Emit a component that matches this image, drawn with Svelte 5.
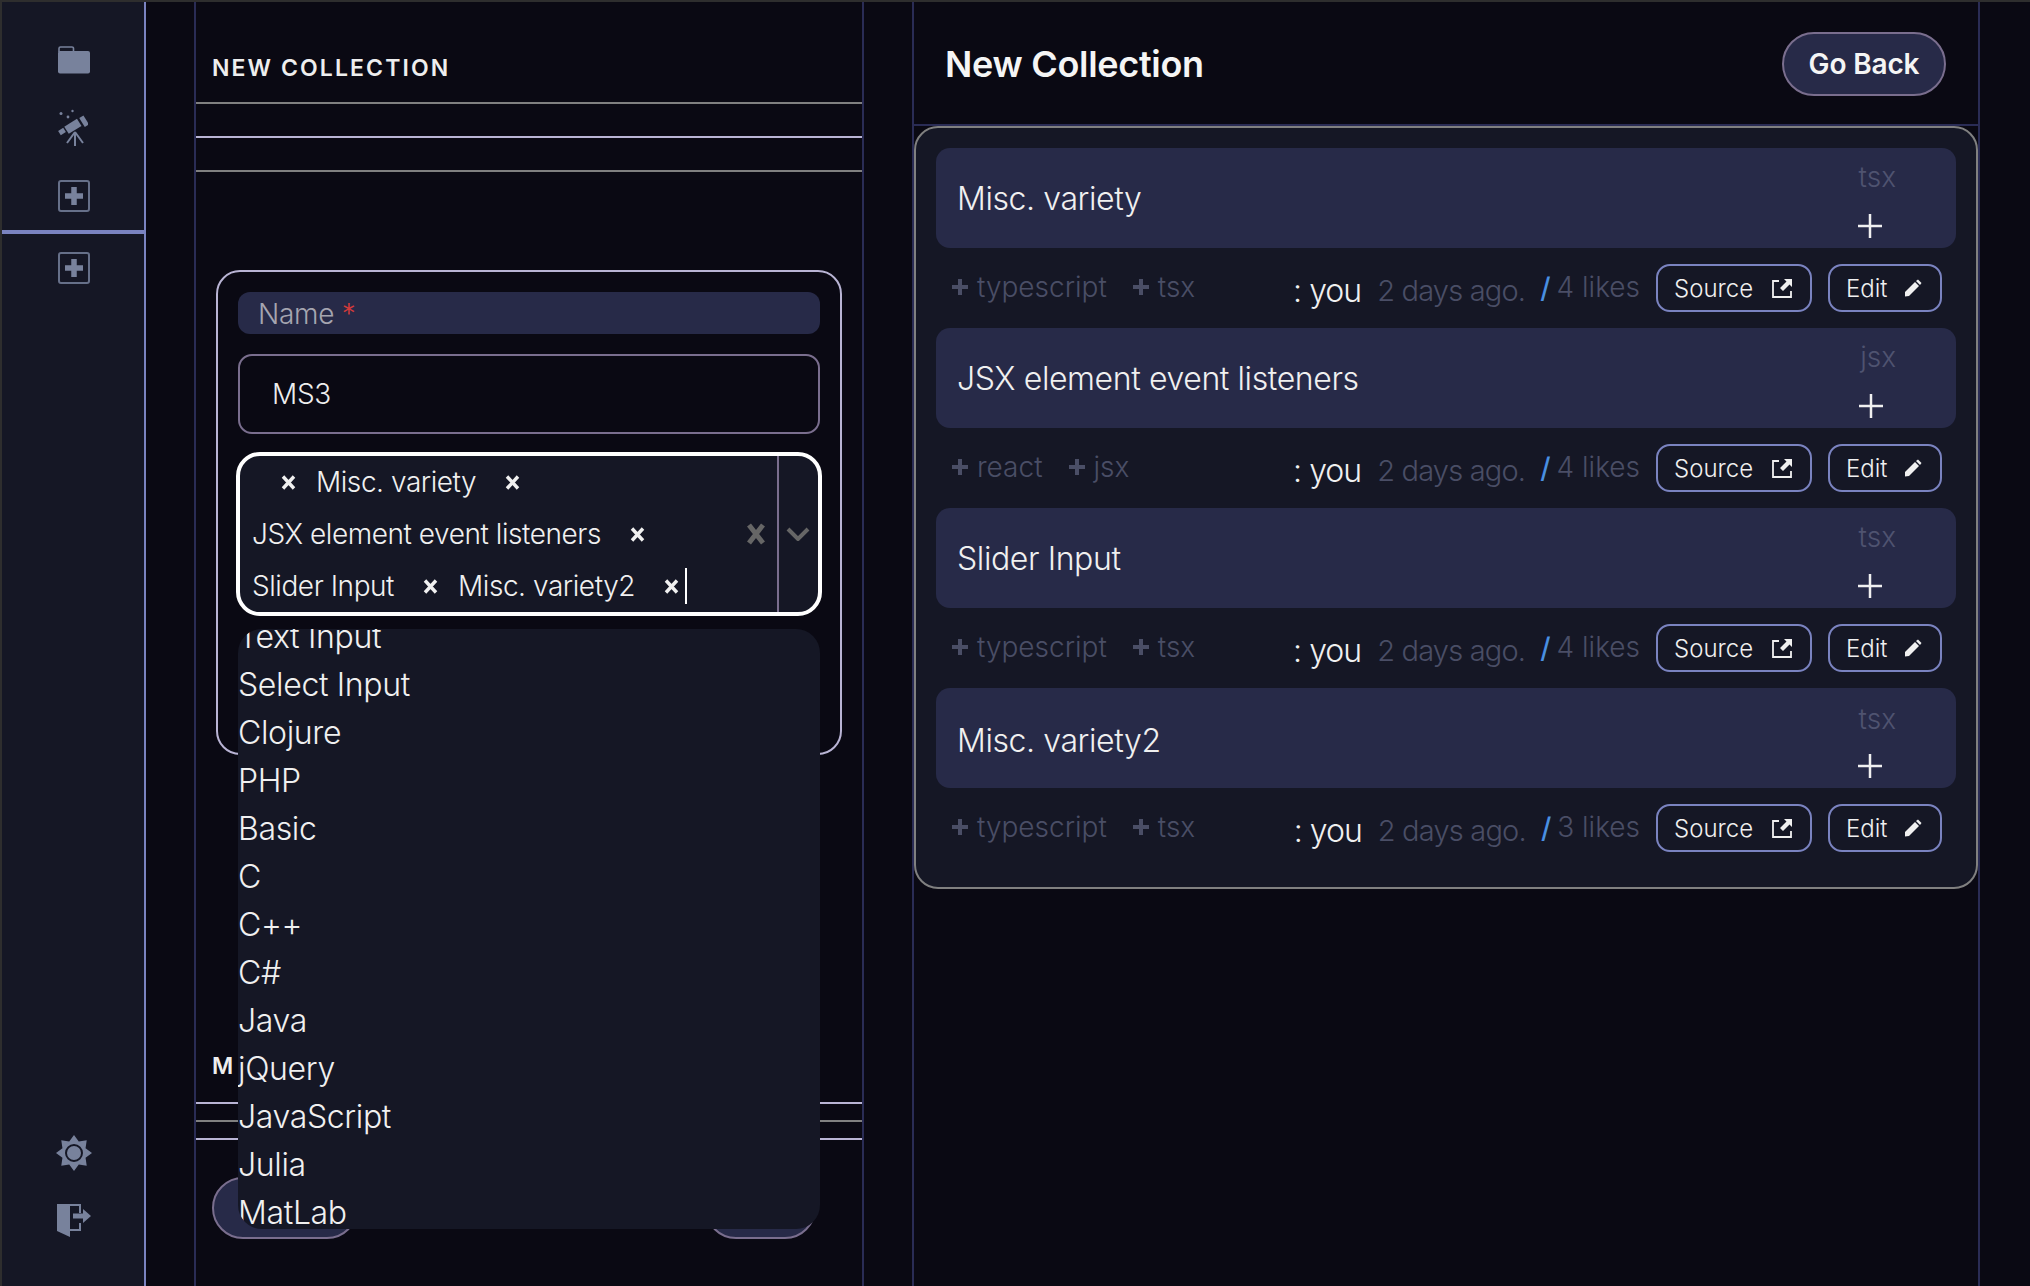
<script>
  const options = ['Text Input', 'Select Input', 'Clojure', 'PHP', 'Basic', 'C', 'C++', 'C#', 'Java', 'jQuery', 'JavaScript', 'Julia', 'MatLab'];
  const chips = ['', 'Misc. variety', 'JSX element event listeners', 'Slider Input', 'Misc. variety2'];
  const items = [
    { title: 'Misc. variety', lang: 'tsx', tags: ['typescript', 'tsx'], likes: 4 },
    { title: 'JSX element event listeners', lang: 'jsx', tags: ['react', 'jsx'], likes: 4 },
    { title: 'Slider Input', lang: 'tsx', tags: ['typescript', 'tsx'], likes: 4 },
    { title: 'Misc. variety2', lang: 'tsx', tags: ['typescript', 'tsx'], likes: 3, low: true },
  ];

  // eight pointed star behind the settings ring
  const star = [...Array(16)].map((v, i) => {
    const r = i % 2 ? 12.5 : 18;
    const a = (Math.PI / 8) * i - Math.PI / 2;
    return `${(18 + r * Math.cos(a)).toFixed(2)},${(18 + r * Math.sin(a)).toFixed(2)}`;
  }).join(' ');
</script>

{#snippet addBox()}
  <svg class="icon" width="32" height="32" viewBox="0 0 32 32">
    <rect x="1" y="1" width="30" height="30" rx="2" fill="none" stroke="#667089" stroke-width="2" />
    <path d="M16 7v18M7 16h18" stroke="#78829c" stroke-width="5.5" fill="none" />
  </svg>
{/snippet}

<div class="app">
  <nav class="side">
    <div class="side-top">
      <svg class="folder" width="32" height="28" viewBox="0 0 32 28">
        <path d="M1 6V2.5A1.5 1.5 0 0 1 2.500 1H14A1.500 1.500 0 0 1 15.500 2.500V6" fill="none" stroke="#78829c" stroke-width="1.600" />
        <rect y="5" width="32" height="22.500" rx="2" fill="#78829c" />
      </svg>
      <svg class="scope" width="30" height="38" viewBox="0 0 30 38">
        <g fill="#78829c">
          <circle cx="3" cy="4.500" r="1.500" />
          <circle cx="10" cy="8" r="1.400" />
          <circle cx="14.500" cy="2" r="1.200" />
          <rect x="1" y="20" width="6" height="5" transform="rotate(-32 4 22.500)" />
          <rect x="7.500" y="13" width="15" height="8.500" transform="rotate(-32 15 17.500)" />
          <rect x="23.500" y="7" width="5" height="10.500" transform="rotate(-32 26 12)" />
        </g>
        <path d="M17 23 9 34M17 23 25 34M17 23V37" stroke="#78829c" stroke-width="2" fill="none" />
      </svg>
      <div class="add-first">{@render addBox()}</div>
      <div class="add-second">{@render addBox()}</div>
    </div>
    <div class="side-bottom">
      <svg width="36" height="36" viewBox="0 0 36 36">
        <polygon points={star} fill="#78829c" />
        <circle cx="18" cy="18" r="8" fill="#78829c" stroke="#151725" stroke-width="2" />
      </svg>
      <svg width="34" height="34" viewBox="0 0 34 34">
        <path d="M0 1H13V34L0 28Z" fill="#78829c" />
        <path d="M13 2H23V10M23 20V27H13" fill="none" stroke="#78829c" stroke-width="2" />
        <path d="M16 10.500H26V6L34 13L26 20V15.500H16Z" fill="#78829c" />
      </svg>
    </div>
  </nav>

  <section class="editor">
    <h2 class="caps">NEW COLLECTION</h2>
    <div class="rule lav"></div>
    <div class="rule"></div>

    <form class="card">
      <div class="name-label">Name <span class="req">*</span></div>
      <input class="name-input" value="MS3" />
      <div class="select-wrap">
        <div class="select">
          <div class="values">
            {#each chips as chip}
              <span class="chip">
                <span>{chip}</span>
                <svg class="chip-x" width="15" height="15" viewBox="0 0 15 15">
                  <path d="M2 1.500 13 13.500M13 1.500 2 13.500" stroke="#f0f0f0" stroke-width="3.400" />
                </svg>
              </span>
            {/each}
            <span class="caret"></span>
          </div>
          <svg class="clear" width="20" height="22" viewBox="0 0 20 22">
            <path d="M3 2 17 20M17 2 3 20" stroke="#666" stroke-width="5" />
          </svg>
          <div class="chev">
            <svg width="24" height="14" viewBox="0 0 24 14">
              <path d="M2 2 12 12 22 2" fill="none" stroke="#666" stroke-width="4" />
            </svg>
          </div>
        </div>
        <ul class="menu">
          {#each options as opt}
            <li>{opt}</li>
          {/each}
        </ul>
      </div>
    </form>

    <h3 class="caps sub">M</h3>
    <div class="rule tight lav"></div>
    <div class="rule tight"></div>
    <div class="rule tight lav"></div>
    <div class="actions">
      <button class="pill wide" type="button"></button>
      <button class="pill narrow" type="button"></button>
    </div>
  </section>

  <section class="preview">
    <header class="preview-head">
      <h1>New Collection</h1>
      <button class="pill back" type="button">Go Back</button>
    </header>
    <div class="list">
      {#each items as item}
        <div class="item" class:low={item.low}>
          <div class="title">{item.title}</div>
          <div class="lang">
            <span>{item.lang}</span>
            <svg width="24" height="24" viewBox="0 0 24 24">
              <path d="M12 0V24M0 12H24" stroke="#f0f0f0" stroke-width="2.500" />
            </svg>
          </div>
        </div>
        <div class="meta">
          <div class="tags">
            {#each item.tags as tag}
              <span class="tag">
                <svg width="16" height="16" viewBox="0 0 16 16">
                  <path d="M8 0V16M0 8H16" stroke="#4a4e66" stroke-width="4" />
                </svg>
                {tag}
              </span>
            {/each}
          </div>
          <span class="you">: you</span>
          <span class="date">2 days ago.</span>
          <span class="slash">/</span>
          <span class="likes">{item.likes} likes</span>
          <button class="ghost source" type="button">
            Source
            <svg width="20" height="19" viewBox="0 0 20 19">
              <path d="M7 2H1V18H19V12" fill="none" stroke="#f0f0f0" stroke-width="1.800" />
              <path d="M12 0H20V8L17.500 5.500 11 12 8 9 14.500 2.500Z" fill="#f0f0f0" />
            </svg>
          </button>
          <button class="ghost edit" type="button">
            Edit
            <svg width="18" height="18" viewBox="0 0 18 18">
              <path d="M1 13 11 3 15 7 5 17 1 17.500Z" fill="#f0f0f0" />
              <path d="M12 2 14 .5 17.500 4 16 6Z" fill="#f0f0f0" />
            </svg>
          </button>
        </div>
      {/each}
    </div>
  </section>
</div>

<style>
  :global(body) {
    margin: 0;
    background: #0a0913;
    font-family: Inter, "Liberation Sans", sans-serif;
    color: #f0f0f0;
  }

  .app {
    box-sizing: border-box;
    display: flex;
    width: 2030px;
    height: 1286px;
    overflow: hidden;
    border-top: 2px solid #2e2e2e;
    border-left: 2px solid #2e2e2e;
  }

  .side {
    box-sizing: border-box;
    flex: none;
    width: 144px;
    display: flex;
    flex-direction: column;
    justify-content: space-between;
    padding: 44px 0 49px 54px;
    background: #151725;
    border-right: 2px solid #7a83c0;
  }

  .side-top,
  .side-bottom {
    display: flex;
    flex-direction: column;
    align-items: flex-start;
  }

  .side svg {
    display: block;
  }

  .folder {
    margin: 0 0 35px 2px;
  }

  .scope {
    margin: 0 0 33px 2px;
  }

  .add-first {
    margin-left: 2px;
    padding-bottom: 18px;
  }

  .add-second {
    margin-left: -54px;
    padding: 18px 0 0 56px;
    width: 86px;
    border-top: 4px solid #7a83c0;
  }

  .side-bottom {
    gap: 32px;
  }

  .side-bottom svg:last-child {
    margin-left: 1px;
  }

  .editor {
    box-sizing: border-box;
    flex: none;
    width: 670px;
    margin-left: 48px;
    border-left: 2px solid #2a2c55;
    border-right: 2px solid #2a2c55;
    border-top: 0;
  }

  .caps {
    box-sizing: border-box;
    margin: 0;
    height: 102px;
    padding: 52px 16px 0;
    font-size: 23px;
    font-weight: 600;
    line-height: 28px;
    letter-spacing: 2.1px;
    color: #eee;
    border-bottom: 2px solid #808080;
  }

  .rule {
    height: 32px;
    border-bottom: 2px solid #808080;
  }

  .rule.lav {
    border-color: #b9b4d4;
  }

  .rule.tight {
    height: 16px;
  }

  .card {
    box-sizing: border-box;
    height: 485px;
    margin: 98px 20px 0;
    padding: 20px;
    border: 2px solid #b9b4d4;
    border-radius: 24px;
  }

  .name-label {
    box-sizing: border-box;
    height: 42px;
    padding-left: 20px;
    font-size: 28px;
    font-weight: 300;
    line-height: 44px;
    letter-spacing: -0.3px;
    color: #a5a5b0;
    background: #272a48;
    border-radius: 12px;
  }

  .req {
    color: #d33a3a;
  }

  .name-input {
    display: block;
    box-sizing: border-box;
    width: 100%;
    height: 80px;
    margin-top: 20px;
    padding: 0 32px;
    font: 300 28px Inter, "Liberation Sans", sans-serif;
    letter-spacing: -0.3px;
    color: #eee;
    background: transparent;
    border: 2px solid #7a6e8e;
    border-radius: 14px;
    outline: none;
  }

  .select-wrap {
    position: relative;
    margin: 18px -2px 0;
  }

  .select {
    box-sizing: border-box;
    display: flex;
    align-items: center;
    height: 164px;
    background: #151725;
    border: 4px solid #fff;
    border-radius: 24px;
  }

  .values {
    flex: 1;
    display: flex;
    flex-wrap: wrap;
    align-items: center;
    padding-left: 12px;
    font-size: 28px;
    font-weight: 300;
    letter-spacing: -0.44px;
  }

  .chip {
    display: flex;
    align-items: center;
    height: 52px;
    margin-right: 20px;
    white-space: nowrap;
  }

  .chip-x {
    margin-left: 29px;
  }

  .caret {
    width: 2px;
    height: 36px;
    margin-left: -14px;
    background: #fff;
  }

  .clear {
    flex: none;
    margin-right: 11px;
  }

  .chev {
    flex: none;
    display: flex;
    align-items: center;
    justify-content: center;
    box-sizing: border-box;
    width: 41px;
    height: 100%;
    padding-right: 1px;
    border-left: 2px solid #7a6e8e;
  }

  .menu {
    position: absolute;
    top: 177px;
    left: 2px;
    right: 2px;
    height: 600px;
    margin: 0;
    padding: 0;
    overflow: hidden;
    list-style: none;
    background: #151725;
    border-radius: 24px;
    z-index: 2;
  }

  .menu li {
    height: 48px;
    margin-top: 0;
    font-size: 32px;
    font-weight: 300;
    line-height: 48px;
    letter-spacing: -0.35px;
  }

  .menu li:first-child {
    margin-top: -16px;
  }

  .sub {
    height: 84px;
    margin-top: 247px;
    padding: 50px 16px 0;
    border: 0;
  }

  .actions {
    display: flex;
    justify-content: space-between;
    margin-top: 37px;
    padding: 0 46px 0 16px;
  }

  .pill {
    box-sizing: border-box;
    height: 62px;
    padding: 0;
    background: #272a48;
    border: 2px solid #7a6e8e;
    border-radius: 32px;
  }

  .wide {
    width: 146px;
  }

  .narrow {
    width: 111px;
  }

  .preview {
    box-sizing: border-box;
    flex: none;
    width: 1068px;
    margin-left: 48px;
    border-left: 2px solid #2a2c55;
    border-right: 2px solid #2a2c55;
  }

  .preview-head {
    box-sizing: border-box;
    display: flex;
    align-items: center;
    justify-content: space-between;
    height: 124px;
    padding: 2px 32px 0 31px;
    border-bottom: 2px solid #2a2c55;
  }

  h1 {
    margin: 0;
    font-size: 36px;
    font-weight: 600;
    letter-spacing: -0.3px;
    color: #f5f5f5;
  }

  .back {
    width: 164px;
    height: 64px;
    font: 600 28px Inter, "Liberation Sans", sans-serif;
    letter-spacing: -0.15px;
    color: #f5f5f5;
  }

  .list {
    box-sizing: border-box;
    height: 763px;
    padding: 20px 20px 19px;
    background: #151725;
    border: 2px solid #808080;
    border-radius: 24px;
  }

  .item {
    display: flex;
    justify-content: space-between;
    height: 100px;
    background: #272a48;
    border-radius: 14px;
  }

  .title {
    padding-left: 21px;
    font-size: 32px;
    font-weight: 300;
    line-height: 102px;
    letter-spacing: -0.4px;
    color: #f0f0f0;
  }

  .lang {
    display: flex;
    flex-direction: column;
    align-items: flex-start;
    gap: 20px;
    padding: 12px 60px 0 0;
    font-size: 28px;
    font-weight: 300;
    line-height: 34px;
    color: #4f5370;
  }

  .lang svg {
    margin-left: -1px;
  }

  /* the last row sits a touch lower in its box */
  .low .title {
    padding-top: 2px;
  }

  .low .lang {
    padding-top: 14px;
    gap: 18px;
  }

  .meta {
    display: flex;
    align-items: center;
    height: 80px;
    padding: 0 14px 0 16px;
    color: #4a4e66;
    font-size: 28px;
    font-weight: 300;
  }

  .tags {
    flex: 1;
    display: flex;
    gap: 26px;
  }

  .tag {
    display: flex;
    align-items: center;
    gap: 9px;
    margin-top: -2px;
  }

  .you {
    padding-top: 4px;
    font-size: 32px;
    letter-spacing: -1px;
    color: #f0f0f0;
  }

  .date {
    padding-top: 4px;
    margin-left: 16px;
    font-size: 29px;
    letter-spacing: -0.8px;
  }

  .slash {
    margin-left: 15px;
    font-size: 28px;
    font-weight: 500;
    color: #4a90e2;
  }

  .likes {
    margin-left: 6px;
    margin-top: -2px;
  }

  .ghost {
    box-sizing: border-box;
    display: flex;
    align-items: center;
    justify-content: space-between;
    height: 48px;
    padding: 0 18px 0 16px;
    font: 300 24px Inter, "Liberation Sans", sans-serif;
    color: #f0f0f0;
    background: transparent;
    border: 2px solid #7a83c0;
    border-radius: 14px;
  }

  .source {
    width: 156px;
    margin-left: 16px;
  }

  .edit {
    width: 114px;
    margin-left: 16px;
  }
</style>
